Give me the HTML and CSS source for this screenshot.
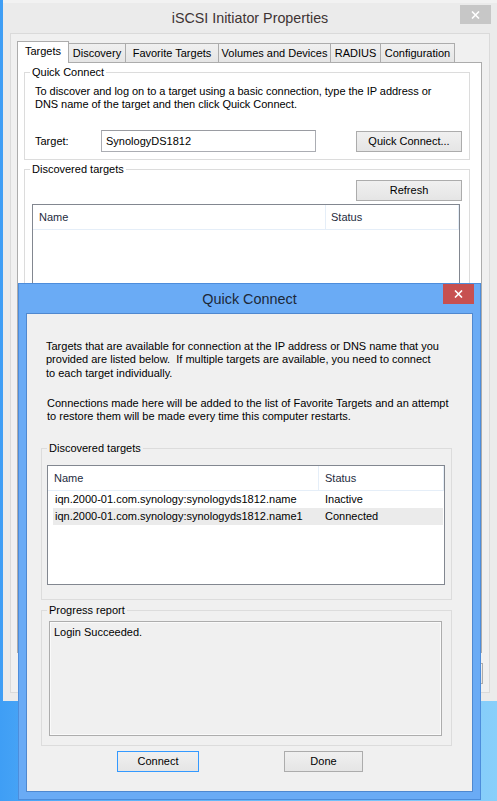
FILE: index.html
```html
<!DOCTYPE html>
<html>
<head>
<meta charset="utf-8">
<title>iSCSI Initiator Properties</title>
<link rel="stylesheet" href="styles.css">
</head>
<body>
<div class="desktop">
  <div class="behind"></div>

  <div class="window main-win">
    <div class="titlebar main-titlebar">
      <span class="title main-title">iSCSI Initiator Properties</span>
      <div class="close close-inactive">
        <svg width="9" height="8" viewBox="0 0 9 8"><path d="M1 0.5 L8 7.5 M8 0.5 L1 7.5" stroke="#fff" stroke-width="1.6" fill="none"/></svg>
      </div>
    </div>
    <div class="client main-client">
      <div class="tabs">
        <div class="tab active tab-targets">Targets</div>
        <div class="tab tab-discovery">Discovery</div>
        <div class="tab tab-fav">Favorite Targets</div>
        <div class="tab tab-vol">Volumes and Devices</div>
        <div class="tab tab-radius">RADIUS</div>
        <div class="tab tab-config">Configuration</div>
      </div>
      <div class="panel">
        <fieldset class="group qc-group">
          <legend>Quick Connect</legend>
          <p class="qc-text">To discover and log on to a target using a basic connection, type the IP address or<br>DNS name of the target and then click Quick Connect.</p>
          <div class="target-row">
            <span class="target-label">Target:</span>
            <div class="input">SynologyDS1812</div>
            <button class="btn btn-qc">Quick Connect...</button>
          </div>
        </fieldset>
        <fieldset class="group dt-main">
          <legend>Discovered targets</legend>
          <div class="refresh-row"><button class="btn btn-refresh">Refresh</button></div>
          <div class="listview main-list">
            <div class="lv-head main-head">
              <div class="hcol main-hname">Name</div>
              <div class="hcol main-hstatus">Status</div>
            </div>
          </div>
        </fieldset>
      </div>
      <div class="main-buttons">
        <button class="btn btn-main">OK</button>
        <button class="btn btn-main">Cancel</button>
        <button class="btn btn-main">Apply</button>
      </div>
    </div>
  </div>

  <div class="window dialog">
    <div class="titlebar dlg-titlebar">
      <span class="title dlg-title">Quick Connect</span>
      <div class="close close-red">
        <svg width="9" height="8" viewBox="0 0 9 8"><path d="M1 0.5 L8 7.5 M8 0.5 L1 7.5" stroke="#fff" stroke-width="1.6" fill="none"/></svg>
      </div>
    </div>
    <div class="client dlg-client">
      <p class="dlg-p1">Targets that are available for connection at the IP address or DNS name that you<br>provided are listed below.&nbsp; If multiple targets are available, you need to connect<br>to each target individually.</p>
      <p class="dlg-p2">Connections made here will be added to the list of Favorite Targets and an attempt<br>to restore them will be made every time this computer restarts.</p>

      <fieldset class="group dlg-group dt-dlg">
        <legend>Discovered targets</legend>
        <div class="listview dlg-list">
          <div class="lv-head dlg-head">
            <div class="hcol dlg-hname">Name</div>
            <div class="hcol dlg-hstatus">Status</div>
          </div>
          <div class="lv-row">
            <span class="cell-name">iqn.2000-01.com.synology:synologyds1812.name</span>
            <span class="cell-status">Inactive</span>
          </div>
          <div class="lv-row hot">
            <span class="cell-name">iqn.2000-01.com.synology:synologyds1812.name1</span>
            <span class="cell-status">Connected</span>
          </div>
        </div>
      </fieldset>

      <fieldset class="group dlg-group progress-group">
        <legend>Progress report</legend>
        <div class="report">Login Succeeded.</div>
      </fieldset>

      <div class="dlg-buttons">
        <button class="btn btn-connect">Connect</button>
        <button class="btn btn-done">Done</button>
      </div>
    </div>
  </div>
</div>
</body>
</html>
```
FILE: styles.css
```css
* { box-sizing: border-box; }

body {
  margin: 0;
  font-family: "Liberation Sans", Arial, sans-serif;
  font-size: 11px;
  color: #000;
}

.desktop {
  position: relative;
  width: 497px;
  height: 801px;
  overflow: hidden;
  background: linear-gradient(to right, #3f9ef5 0%, #58b0f8 15%, #6cbdf9 60%, #88cffa 100%);
}

.behind {
  position: absolute;
  left: 3px;
  top: -100px;
  width: 494px;
  height: 103px;
  background: #f2f2f2;
}

.window {
  position: absolute;
}

/* ---------- main window ---------- */
.main-win {
  left: 3px;
  top: 3px;
  width: 494px;
  height: 698px;
  background: #ebebeb;
}

.titlebar {
  display: grid;
  grid-template-columns: 1fr auto 1fr;
  padding: 0 6px;
}

.main-titlebar { height: 30px; }

.title {
  grid-column: 2;
  align-self: center;
  white-space: nowrap;
}

.main-title {
  font-size: 14.3px;
  color: #3e3434;
}

.close {
  grid-column: 3;
  justify-self: end;
  align-self: start;
  width: 31px;
  height: 19px;
  display: flex;
  align-items: center;
  justify-content: center;
}

.close-inactive {
  margin-top: 2px;
  background: #c7c7c7;
}

.main-client {
  margin-left: 7px;
  width: 480px;
  height: 660px;
  background: #f0f0f0;
  border: 1px solid #dadada;
  padding: 7px 0 0 6px;
}

.tabs {
  display: flex;
  align-items: flex-end;
  height: 21px;
}

.tab {
  height: 19px;
  border: 1px solid #acacac;
  border-bottom: none;
  background: linear-gradient(#f0f0f0, #e5e5e5);
  margin-left: -1px;
  text-align: center;
  line-height: 19px;
  white-space: nowrap;
}

.tab.active {
  position: relative;
  z-index: 1;
  height: 22px;
  margin-bottom: -1px;
  margin-left: 0;
  background: #fff;
  line-height: 18px;
}

.tab-targets { width: 52px; }
.tab-discovery { width: 58px; }
.tab-fav { width: 94px; }
.tab-vol { width: 113px; }
.tab-radius { width: 51px; }
.tab-config { width: 75px; }

.panel {
  width: 465px;
  height: 591px;
  background: #fff;
  border: 1px solid #acacac;
  padding: 0 11px 0 6px;
}

.group {
  margin: 0;
  min-inline-size: 0;
  border: 1px solid #dcdcdc;
}

.group legend {
  padding: 0 2px;
  line-height: 13px;
}

.qc-group {
  margin-top: 3px;
  padding: 0 7px 7px 10px;
}

.qc-group legend { margin-left: -5px; }

.qc-text {
  margin: 6px 0 0;
  line-height: 13px;
  letter-spacing: -0.04px;
  white-space: nowrap;
}

.target-row {
  display: flex;
  align-items: flex-start;
  margin-top: 19px;
}

.target-label {
  width: 66px;
  line-height: 22px;
}

.input {
  width: 215px;
  height: 22px;
  border: 1px solid #abadb3;
  border-top-color: #9a9ca2;
  background: #fff;
  padding-left: 4px;
  line-height: 20px;
}

.btn {
  font: inherit;
  color: #000;
  border: 1px solid #acacac;
  background: linear-gradient(#f0f0f0, #e5e5e5);
  height: 21px;
  padding: 0;
  line-height: 19px;
  text-align: center;
  border-radius: 0;
}

.btn-qc {
  margin-left: auto;
  margin-top: 1px;
  width: 106px;
}

.dt-main {
  margin-top: 3px;
  padding: 0 9px 5px 7px;
}

.dt-main legend { margin-left: -2px; }

.refresh-row {
  display: flex;
  justify-content: flex-end;
  margin: 4px -2px 0 0;
}

.btn-refresh { width: 106px; }

.listview {
  background: #fff;
  border: 1px solid #828790;
}

.main-list {
  margin-top: 3px;
  height: 437px;
}

.lv-head {
  display: flex;
  height: 25px;
  border-bottom: 1px solid #e5eef8;
  color: #1e2b40;
}

.hcol {
  line-height: 24px;
  border-right: 1px solid #e5eef8;
}

.main-hname { width: 293px; padding-left: 6px; }
.main-hstatus { width: 133px; padding-left: 5px; }

.main-buttons {
  display: flex;
  justify-content: flex-end;
  gap: 7px;
  margin-top: 10px;
  padding-right: 6px;
}

.btn-main { width: 75px; }

/* ---------- Quick Connect dialog ---------- */
.dialog {
  left: 18px;
  top: 283px;
  width: 463px;
  height: 517px;
  background: #6aabf5;
  border: 1px solid #4d8ddb;
}

.dlg-titlebar { height: 29px; }

.dlg-title {
  font-size: 14.4px;
  color: #1c2838;
}

.close-red {
  background: #c75050;
  height: 20px;
}

.dlg-client {
  margin-left: 7px;
  width: 447px;
  height: 479px;
  background: #f0f0f0;
  border: 1px solid #4f88cf;
}

.dlg-p1,
.dlg-p2 {
  margin: 0 0 0 19px;
  line-height: 13.3px;
  white-space: nowrap;
}

.dlg-p1 { margin-top: 26px; }
.dlg-p2 { margin-top: 17px; margin-left: 20px; }

.dlg-group {
  margin-left: 14px;
  width: 411px;
  padding: 0 6px 0 5px;
}

.dt-dlg {
  margin-top: 19px;
  padding-bottom: 14px;
}

.dlg-list {
  margin-top: 10px;
  height: 120px;
}

.dlg-hname { width: 271px; padding-left: 6px; }
.dlg-hstatus { width: 125px; padding-left: 6px; }

.lv-row {
  display: flex;
  height: 17px;
  line-height: 17px;
  margin: 0 1px 0 5px;
  white-space: nowrap;
}

.lv-row.hot { background: #ebebeb; }

.cell-name {
  width: 272px;
  padding-left: 2px;
}

.progress-group {
  margin-top: 4px;
  padding-bottom: 9px;
}

.report {
  margin: 4px 0 0 2px;
  width: 393px;
  height: 115px;
  border: 1px solid #adadad;
  box-shadow: inset 0 0 0 1px #fafafa;
  background: #f0f0f0;
  padding: 4px 4px;
  line-height: 13.3px;
}

.dlg-buttons {
  display: flex;
  margin: 5px 0 0 90px;
}

.btn-connect {
  width: 82px;
  border-color: #3399ff;
}

.btn-done {
  width: 79px;
  margin-left: 85px;
}
```
